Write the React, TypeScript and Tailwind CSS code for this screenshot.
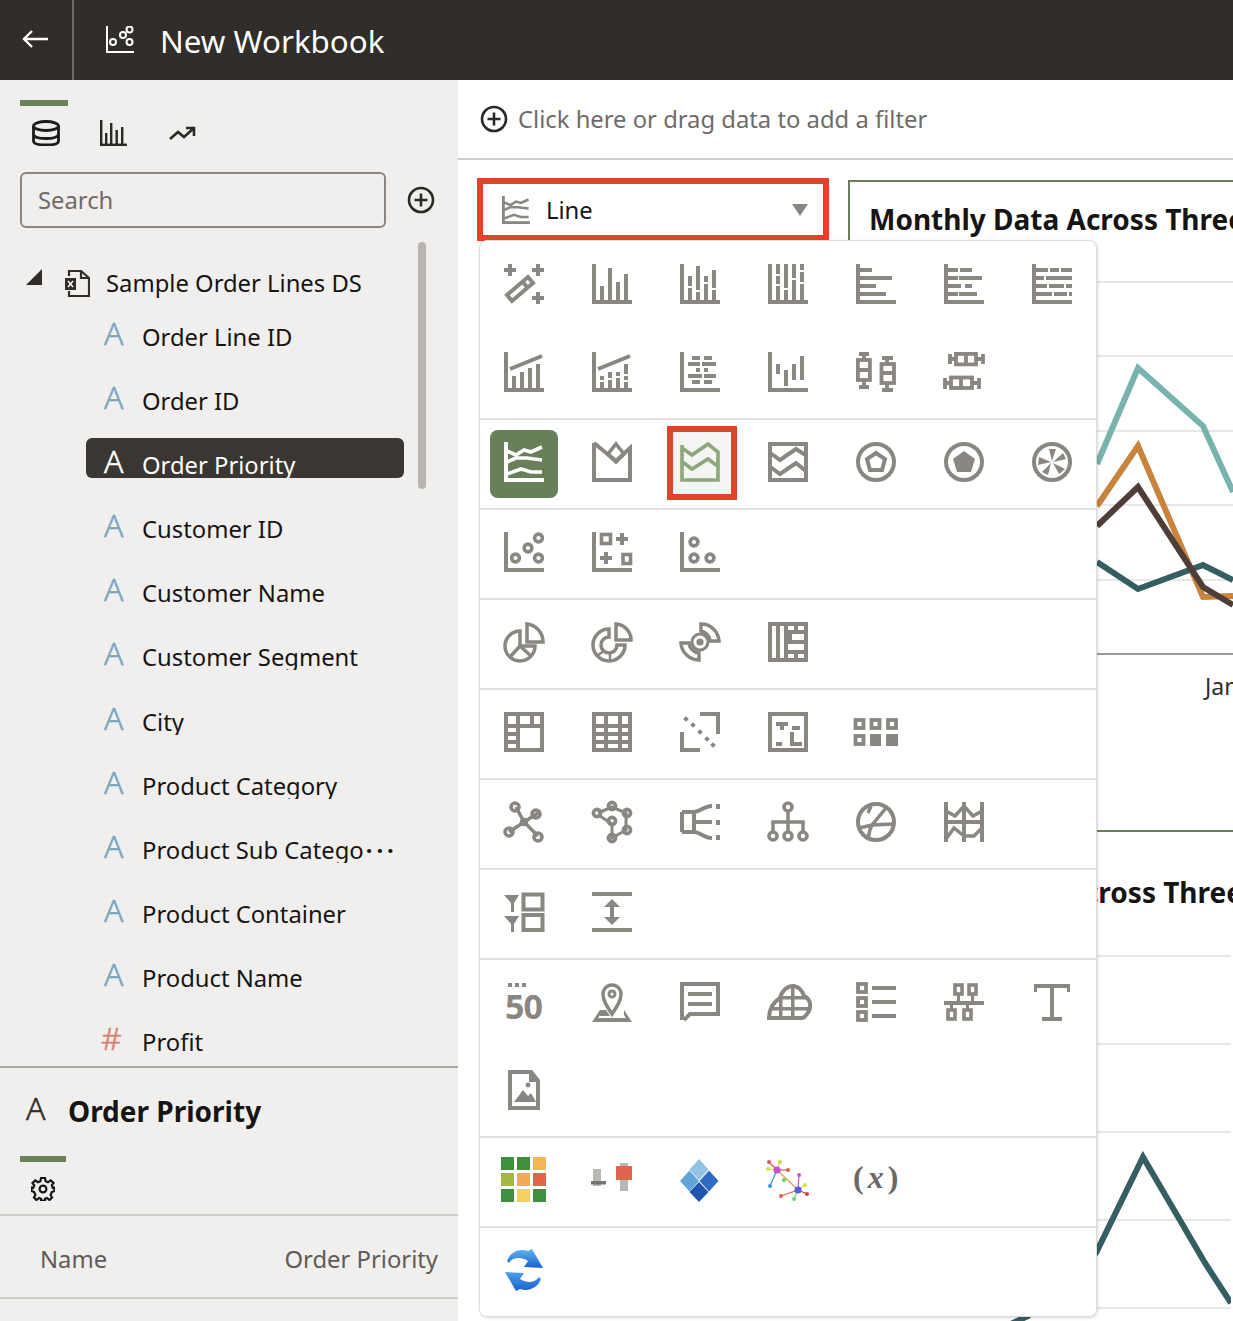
import React from "react";

type Rc = [number, number, number, number];
const Rs = ({ r }: { r: Rc[] }) => (
  <>
    {r.map((a, i) => (
      <rect key={i} x={a[0]} y={a[1]} width={a[2]} height={a[3]} />
    ))}
  </>
);
const st = { stroke: "currentColor", fill: "none", strokeWidth: 3.5 } as const;
const Axis = () => <Rs r={[[0, 0, 4, 40], [0, 36, 40, 4]]} />;
const Ring = ({ x, y, r = 3.9, w = 3.6 }: { x: number; y: number; r?: number; w?: number }) => (
  <circle cx={x} cy={y} r={r} stroke="currentColor" fill="none" strokeWidth={w} />
);
const Ico = ({ children, c = "text-[#8a8681]" }: { children: React.ReactNode; c?: string }) => (
  <svg viewBox="0 0 40 40" fill="currentColor" className={`relative block w-10 h-10 overflow-visible ${c}`}>
    {children}
  </svg>
);

const LineGlyph = () => (
  <>
    <Rs r={[[0, 0, 4, 40], [0, 36, 40, 4]]} />
    <g {...st} strokeWidth={3.6}>
      <path d="M3 9 12 13 20 8 27 10 38 5" />
      <path d="M3 20 12 16 23 16 38 18" />
      <path d="M3 32 17 27 27 30 38 30" />
    </g>
  </>
);

const row1: React.ReactNode[] = [
  <>
    <Rs r={[[0, 4, 12, 4], [4, 0, 4, 12], [28, 4, 12, 4], [32, 0, 4, 12], [28, 32, 12, 4], [32, 28, 4, 12]]} />
    <path {...st} strokeWidth={4} d="M3 31 8 37 29 19 24 13ZM18 17 23 23" />
  </>,
  <>
    <Axis />
    <Rs r={[[8, 22, 4, 14], [16, 4, 4, 32], [24, 18, 4, 18], [32, 10, 4, 26]]} />
  </>,
  <>
    <Axis />
    <Rs r={[[8, 12, 4, 10], [8, 24, 4, 12], [16, 2, 4, 24], [16, 28, 4, 8], [24, 12, 4, 6], [24, 20, 4, 16], [32, 6, 4, 18], [32, 26, 4, 10]]} />
  </>,
  <>
    <Axis />
    <Rs r={[[8, 0, 4, 10], [8, 12, 4, 8], [8, 22, 4, 14], [16, 0, 4, 24], [16, 26, 4, 10], [24, 0, 4, 14], [24, 16, 4, 20], [32, 0, 4, 6], [32, 8, 4, 10], [32, 20, 4, 16]]} />
  </>,
  <>
    <Axis />
    <Rs r={[[4, 4, 12, 4], [4, 12, 32, 4], [4, 20, 16, 4], [4, 28, 26, 4]]} />
  </>,
  <>
    <Axis />
    <Rs r={[[4, 4, 10, 4], [16, 4, 12, 4], [4, 12, 10, 4], [15, 12, 23, 4], [4, 20, 13, 4], [21, 20, 7, 4], [4, 28, 10, 4], [15, 28, 18, 4]]} />
  </>,
  <>
    <Axis />
    <Rs r={[[4, 4, 12, 4], [18, 4, 9, 4], [29, 4, 11, 4], [4, 12, 8, 4], [14, 12, 26, 4], [4, 20, 11, 4], [17, 20, 15, 4], [34, 20, 6, 4], [4, 28, 16, 4], [22, 28, 13, 4], [37, 28, 3, 4]]} />
  </>,
];
const row2: React.ReactNode[] = [
  <>
    <Axis />
    <Rs r={[[8, 24, 4, 12], [16, 20, 4, 16], [24, 16, 4, 20], [32, 12, 4, 24]]} />
    <path {...st} strokeWidth={4} d="M6 17 38 4" />
  </>,
  <>
    <Axis />
    <Rs r={[[8, 24, 4, 4], [8, 30, 4, 6], [16, 20, 4, 6], [16, 28, 4, 8], [24, 20, 4, 4], [24, 26, 4, 10], [32, 12, 4, 10], [32, 24, 4, 4], [32, 30, 4, 6]]} />
    <path {...st} strokeWidth={4} d="M6 17 38 4" />
  </>,
  <>
    <Axis />
    <Rs r={[[12, 4, 8, 4], [24, 4, 8, 4], [8, 10, 12, 4], [22, 10, 14, 4], [16, 16, 4, 4], [24, 16, 4, 4], [8, 22, 14, 4], [24, 22, 12, 4], [12, 28, 8, 4], [24, 28, 8, 4]]} />
  </>,
  <>
    <Axis />
    <Rs r={[[8, 12, 4, 10], [16, 18, 4, 16], [24, 12, 4, 16], [32, 4, 4, 24]]} />
  </>,
  <>
    <g {...st} strokeWidth={3.8}>
      <path d="M3 2H13M8 2V8M8 28V34M3 35H13M26 6H37M31 6V12M31 31V37M26 38H37" />
      <rect x="1.900" y="8" width="12" height="20" />
      <rect x="25.500" y="12" width="12.500" height="19" />
      <path d="M2 18H14M25 21H38" />
    </g>
  </>,
  <>
    <g {...st} strokeWidth={3.8}>
      <path d="M6 2V12M6 7H12M32 7H39M39 2V12M1 26V37M1 31H7M28 31H35M35 26V37" />
      <rect x="12" y="1.900" width="20" height="10.500" />
      <rect x="7" y="25.500" width="21" height="10.500" />
      <path d="M22 2V12M17 26V36" />
    </g>
  </>,
];
const row3: React.ReactNode[] = [
  <LineGlyph />,
  <>
    <path {...st} strokeWidth={4} d="M2 1V38H38V6L24 19 2 1" />
    <path {...st} strokeWidth={3.6} d="M24 2 32 12 24 20 16 12Z" />
  </>,
  <>
    <path {...st} strokeWidth={3.6} d="M2 3V38H38V10L28 2 12 13 2 6" />
    <path {...st} strokeWidth={3.6} d="M1 19 12 27 28 17 39 25" />
  </>,
  <>
    <rect {...st} strokeWidth={4} x="2" y="2" width="36" height="36" />
    <path {...st} strokeWidth={4} d="M1 10 12 18 28 7 39 14M1 24 12 32 28 21 39 30" />
  </>,
  <>
    <circle {...st} strokeWidth={4} cx="20" cy="20" r="18" />
    <path {...st} strokeWidth={4} d="M20 11 29 17 26 28H14L11 17Z" />
  </>,
  <>
    <circle {...st} strokeWidth={4} cx="20" cy="20" r="18" />
    <path d="M20 9 31 17 27 30H13L9 17Z" />
  </>,
  <>
    <circle {...st} strokeWidth={4} cx="20" cy="20" r="18" />
    <path d="M17 7H24L20 19ZM31 11 34 17 21 20ZM33 27 27 32 21 21ZM16 33 10 30 19 21ZM6 23 7 15 19 20Z" />
  </>,
];
const row4: React.ReactNode[] = [
  <>
    <Axis />
    <Ring x={11.5} y={26} />
    <Ring x={24} y={16} />
    <Ring x={34.5} y={6} />
    <Ring x={34.5} y={26} />
  </>,
  <>
    <Axis />
    <rect {...st} strokeWidth={3.6} x="9.500" y="2.500" width="9" height="9" />
    <rect {...st} strokeWidth={3.6} x="31" y="22.500" width="7.500" height="9" />
    <Rs r={[[24, 5, 12, 4], [28, 1, 4, 12], [8, 24, 12, 4], [12, 20, 4, 12]]} />
  </>,
  <>
    <Axis />
    <Ring x={14} y={10} />
    <Ring x={14} y={26} />
    <Ring x={30} y={26} />
  </>,
];
const row5: React.ReactNode[] = [
  <>
    <path {...st} d="M23 2V20H39A18 18 0 0 0 23 2Z" />
    <path {...st} d="M16 9A15 15 0 1 0 31 24H16ZM16 24 6 35M16 24 27 34" />
  </>,
  <>
    <path {...st} d="M24 2V18H39A16 16 0 0 0 24 2Z" />
    <path {...st} d="M17 7A16 16 0 1 0 33 23H25A8 8 0 1 1 17 15Z" />
    <path {...st} strokeWidth={2.5} d="M6 33 12 29M18 39 18 32" />
  </>,
  <>
    <path {...st} d="M21 2V9A11 11 0 0 1 30 19H39A18 18 0 0 0 21 2Z" />
    <path {...st} d="M19 38V31A11 11 0 0 1 9 21H1A18 18 0 0 0 19 38Z" />
    <circle {...st} strokeWidth={3} cx="20" cy="20" r="8" />
    <circle cx="20" cy="20" r="3.600" />
  </>,
  <>
    <rect {...st} strokeWidth={4} x="2" y="2" width="36" height="36" />
    <Rs r={[[8, 0, 4, 40], [16, 0, 4, 40], [16, 8, 24, 4], [16, 18, 24, 4], [16, 28, 24, 4], [26, 0, 4, 12], [26, 28, 4, 10], [20, 12, 4, 6]]} />
  </>,
];
const row6: React.ReactNode[] = [
  <>
    <rect {...st} strokeWidth={4} x="2" y="2" width="36" height="36" />
    <Rs r={[[0, 12, 40, 4], [12, 0, 4, 40], [26, 0, 4, 14], [0, 20, 14, 4], [0, 28, 14, 4]]} />
  </>,
  <>
    <rect {...st} strokeWidth={4} x="2" y="2" width="36" height="36" />
    <Rs r={[[0, 12, 40, 4], [0, 20, 40, 4], [0, 28, 40, 4], [12, 0, 4, 40], [26, 0, 4, 40]]} />
  </>,
  <>
    <path {...st} strokeWidth={4} d="M20 2H38V22M2 20V38H20" />
    {[[6, 7], [13, 13], [20, 20], [27, 27], [33, 33]].map(([x, y], i) => (
      <rect key={i} x={x - 2} y={y - 2} width="4" height="4" transform={`rotate(45 ${x} ${y})`} />
    ))}
  </>,
  <>
    <rect {...st} strokeWidth={4} x="2" y="2" width="36" height="36" />
    <Rs r={[[8, 10, 12, 4], [12, 14, 4, 4], [24, 14, 8, 4], [8, 30, 6, 4], [22, 20, 4, 14], [22, 30, 12, 4]]} />
  </>,
  <g transform="translate(0 1)">
    <rect {...st} strokeWidth={3.800} x="-0.500" y="7" width="8" height="8" />
    <rect {...st} strokeWidth={3.800} x="15.500" y="7" width="8" height="8" />
    <rect {...st} strokeWidth={3.800} x="32" y="7" width="8" height="8" />
    <rect {...st} strokeWidth={3.800} x="-0.500" y="23" width="8" height="8" />
    <Rs r={[[14, 21, 11, 12], [30, 21, 12, 12]]} />
  </g>,
];
const row7: React.ReactNode[] = [
  <>
    <path {...st} d="M12 5 20 20 34 11M20 20 34 34M20 20 5 30" />
    <Ring x={11} y={5} r={4} />
    <Ring x={32} y={12} r={4} />
    <Ring x={5} y={30} r={4} />
    <Ring x={34} y={35} r={4} />
    <Ring x={20} y={20} r={2.5} />
  </>,
  <>
    <path {...st} strokeWidth={3} d="M6 11 20 5 34 11 34 28 20 36 20 22 8 14" />
    <Ring x={5} y={11} r={3.6} />
    <Ring x={20} y={4} r={3.6} />
    <Ring x={35} y={11} r={3.6} />
    <Ring x={20} y={19} r={3.6} />
    <Ring x={35} y={28} r={3.6} />
    <Ring x={20} y={36} r={3.6} />
  </>,
  <>
    <path {...st} strokeWidth={4} d="M2 10H14C20 10 24 4 32 4M2 30H14C20 30 24 36 32 36M2 10V30M14 10V30M14 20H32" />
    <Rs r={[[36, 2, 4, 5], [36, 18, 4, 5], [36, 33, 4, 5]]} />
  </>,
  <>
    <Ring x={20} y={5} r={4} />
    <Ring x={5} y={34} r={4} />
    <Ring x={20} y={34} r={4} />
    <Ring x={35} y={34} r={4} />
    <path {...st} d="M20 9V30M5 30V20H35V30" />
  </>,
  <>
    <circle {...st} strokeWidth={4} cx="20" cy="20" r="18" />
    <path {...st} d="M3 26 16 23 38 22M30 6 16 23C13 28 13 32 12 37M15 4 12 11" />
  </>,
  <>
    <Rs r={[[0, 0, 4, 40], [18, 0, 4, 40], [36, 0, 4, 40], [0, 18, 40, 4]]} />
    <path {...st} d="M2 9 11 14 20 4 29 14 38 9M2 37 10 26 20 34 30 34 38 26" />
  </>,
];
const row8: React.ReactNode[] = [
  <>
    <path d="M0 3H15L10 11V20H7V11ZM0 24H15L10 32V40H7V32Z" />
    <rect {...st} strokeWidth={4} x="19.500" y="2.500" width="19" height="15" />
    <rect {...st} strokeWidth={4} x="19.500" y="23" width="19" height="15" />
  </>,
  <>
    <Rs r={[[0, 0, 40, 4], [0, 36, 40, 4], [18, 10, 4, 20]]} />
    <path d="M20 7 28 15H12ZM20 33 12 25H28Z" />
  </>,
];
const row9: React.ReactNode[] = [
  <>
    <Rs r={[[4, 1, 4, 4], [11, 1, 4, 4], [18, 1, 4, 4]]} />
    <text x="1" y="37" fontFamily="'Noto Sans', sans-serif" fontWeight="700" fontSize="34" letterSpacing="-1">50</text>
  </>,
  <>
    <path {...st} d="M20 32C14 23 11 18 11 12A9 9 0 0 1 29 12C29 18 26 23 20 32Z" />
    <circle {...st} strokeWidth={3} cx="20" cy="12" r="3" />
    <path d="M8 28H14L18 34H8ZM0 40 8 28V33L6 36H34L32 33V28L40 40Z" />
  </>,
  <path {...st} strokeWidth={4} d="M2 38V2H38V32H10L4 38M8 12H32M8 22H32" />,
  <>
    <path {...st} strokeWidth={4} d="M1 36C1 27 4 21 12 16 14 8 20 4 25 4 30 4 35 9 36 14 43 17 44 26 39 32 37 35 36 36 34 36Z" />
    <Rs r={[[4, 25, 36, 3.500], [13, 14, 26, 3.500], [11, 16, 3.500, 20], [23, 4, 3.500, 32]]} />
  </>,
  <>
    <rect {...st} strokeWidth={3.800} x="2" y="2" width="8" height="8" />
    <rect {...st} strokeWidth={3.800} x="2" y="16" width="8" height="8" />
    <rect {...st} strokeWidth={3.800} x="2" y="30" width="8" height="8" />
    <Rs r={[[16, 4, 24, 4], [16, 18, 24, 4], [16, 32, 24, 4]]} />
  </>,
  <>
    <rect {...st} strokeWidth={3.600} x="11" y="3" width="7" height="9" />
    <rect {...st} strokeWidth={3.600} x="25" y="3" width="7" height="9" />
    <rect {...st} strokeWidth={3.600} x="4" y="28" width="7" height="9" />
    <rect {...st} strokeWidth={3.600} x="20" y="28" width="7" height="9" />
    <Rs r={[[0, 19, 40, 4], [13, 12, 3, 8], [27, 12, 3, 8], [6, 22, 3, 6], [22, 22, 3, 6]]} />
  </>,
  <Rs r={[[2, 2, 36, 4], [2, 2, 3, 8], [35, 2, 3, 8], [18, 4, 4, 34], [10, 35, 20, 4]]} />,
];

const Doc = () => (
  <>
    <path d="M0 0H24L32 10V40H0ZM4 4V36H28V12H21V4Z" transform="translate(4 0)" />
    <circle cx="24" cy="15" r="2.400" />
    <path d="M10 32 19 20 24 26 27 23 32 32Z" />
  </>
);

const Heat = () => {
  const c = ["#3f8f3f", "#3f8f3f", "#f3b45a", "#a3b845", "#f3aa57", "#e0654a", "#3f8f3f", "#f5cf63", "#3f8f3f"];
  return (
    <>
      {c.map((f, i) => (
        <rect key={i} x={-3 + (i % 3) * 16} y={-3 + Math.floor(i / 3) * 16} width="13" height="13" fill={f} />
      ))}
    </>
  );
};
const Slider = () => (
  <>
    <rect x="1" y="9" width="8" height="17" fill="#b9b7b4" />
    <rect x="-1" y="21" width="15" height="3.500" fill="#77746f" />
    <rect x="28" y="3" width="8" height="28" fill="#b9b7b4" />
    <rect x="24" y="6" width="16" height="14" fill="#e0654a" />
  </>
);
const Diamond = () => (
  <>
    <path d="M19 -1 28.500 9.500 19 20 9.500 9.500Z" fill="#93c3e2" />
    <path d="M9.500 10.500 19 21 9.500 31.500 0 21Z" fill="#5fa5d8" />
    <path d="M29 10.500 38.500 21 29 31.500 19.500 21Z" fill="#2d6cc0" />
    <path d="M19 22 28.500 32 19 42 9.500 32Z" fill="#2055ae" />
  </>
);
const Net = () => {
  const h1 = [9, 10];
  const h2 = [30, 30];
  const a: [number, number, string][] = [[1, 2, "#cf5a5a"], [12, 2, "#c9d94a"], [20, 10, "#d9604a"], [0, 9, "#d5e04a"], [2, 26, "#3f97d9"]];
  const b: [number, number, string][] = [[31, 15, "#c35ac8"], [37, 25, "#d5e04a"], [39, 34, "#d9403a"], [26, 39, "#6bd96b"], [13, 36, "#d9604a"]];
  return (
    <>
      {a.map(([x, y, c], i) => (
        <g key={i}>
          <line x1={h1[0]} y1={h1[1]} x2={x} y2={y} stroke={c} strokeWidth="1.200" />
          <circle cx={x} cy={y} r="2" fill={c} />
        </g>
      ))}
      {b.map(([x, y, c], i) => (
        <g key={i}>
          <line x1={h2[0]} y1={h2[1]} x2={x} y2={y} stroke={c} strokeWidth="1.200" />
          <circle cx={x} cy={y} r="2" fill={c} />
        </g>
      ))}
      <line x1={h1[0]} y1={h1[1]} x2={h2[0]} y2={h2[1]} stroke="#e89a4a" strokeWidth="1.200" />
      <circle cx="16" cy="20" r="2.200" fill="#6bd96b" />
      <circle cx={h1[0]} cy={h1[1]} r="3.600" fill="#c94fd0" />
      <circle cx={h2[0]} cy={h2[1]} r="3.600" fill="#5a5fd8" />
    </>
  );
};
const Refresh = () => (
  <>
    <defs>
      <linearGradient id="rfa" x1="0" y1="0" x2="0" y2="1">
        <stop offset="0" stopColor="#5fb7ee" />
        <stop offset="1" stopColor="#1a5fd0" />
      </linearGradient>
      <linearGradient id="rfb" x1="0" y1="1" x2="0" y2="0">
        <stop offset="0" stopColor="#4fa0ea" />
        <stop offset="1" stopColor="#1a5fd0" />
      </linearGradient>
    </defs>
    <path fill="url(#rfa)" d="M3 11C6 3 14 -2 24 1L28 -1 39 18 20 17 24 11C16 6 8 8 5 13Z" />
    <path fill="url(#rfb)" transform="rotate(180 20 20)" d="M3 11C6 3 14 -2 24 1L28 -1 39 18 20 17 24 11C16 6 8 8 5 13Z" />
  </>
);

const Section = ({ items, last = false }: { items: React.ReactNode[]; last?: boolean }) => (
  <div className={`grid grid-cols-7 gap-y-12 pt-[22px] pb-[26px] ${last ? "" : "border-b-2 border-[#e4e2df]"}`}>
    {items.map((n, i) => (
      <div key={i} className="relative px-6 h-10 w-[88px]">
        {n}
      </div>
    ))}
  </div>
);

const fields = [
  "Order Line ID",
  "Order ID",
  "Order Priority",
  "Customer ID",
  "Customer Name",
  "Customer Segment",
  "City",
  "Product Category",
  "Product Sub Catego",
  "Product Container",
  "Product Name",
  "Profit",
];

const Field = ({ name }: { name: string }) => {
  const sel = name === "Order Priority";
  const num = name === "Profit";
  return (
    <div className={`ml-[86px] w-[318px] h-10 shrink-0 overflow-hidden flex pl-[18px] rounded-md ${sel ? "bg-[#3a3632] text-white" : "text-[#161513]"}`}>
      <span className={`w-[38px] shrink-0 pt-[6px] h-10 text-[32px] leading-[34px] font-light [-webkit-text-stroke:0.5px] ${sel ? "text-white" : num ? "text-[#d4826f] -ml-[3px] pr-[3px] box-content" : "text-[#7aa6bb]"}`}>
        {num ? "#" : "A"}
      </span>
      <span className="text-[23.800px] pt-[11px] leading-8 whitespace-nowrap flex">
        {name}
        {name === "Product Sub Catego" && <span className="tracking-[4px] font-bold ml-0.5">···</span>}
      </span>
    </div>
  );
};

const Grid = ({ ys }: { ys: number[] }) => (
  <>
    {ys.map((y) => (
      <line key={y} x1="850" x2="1233" y1={y} y2={y} stroke="#e7e7e7" strokeWidth="2" />
    ))}
  </>
);

const Title = ({ cls }: { cls: string }) => (
  <div className={`pl-5 -ml-px whitespace-nowrap text-[28px] font-bold leading-10 text-[#161513] ${cls}`}>Monthly Data Across Three Years</div>
);

const PlusCircle = () => (
  <svg viewBox="0 0 28 28" className="w-7 h-7 block" fill="none" stroke="#2b2926" strokeWidth="2.600">
    <circle cx="14" cy="14" r="12" />
    <path d="M14 7.500V20.500M7.500 14H20.500" />
  </svg>
);

export default function App() {
  return (
    <div className="relative w-[1233px] h-[1321px] overflow-hidden bg-white font-['Noto_Sans',sans-serif] text-[#161513]">
      <header className="h-20 bg-[#312d2a] flex items-stretch text-white">
        <div className="w-[74px] border-r-2 border-[#6f6b67] flex items-center pl-[22px]">
          <svg viewBox="0 0 26 18" className="w-[26px] h-[18px] -mt-[2px]" fill="none" stroke="#fff" strokeWidth="2.400">
            <path d="M26 9H2M10 1 2 9 10 17" />
          </svg>
        </div>
        <div className="flex items-center pl-[32px]">
          <svg viewBox="0 0 28 27" className="w-7 h-[27px] -mt-[1px]" fill="none" stroke="#fff" strokeWidth="2">
            <path d="M1 0V26H28" />
            <circle cx="7" cy="16" r="3" />
            <circle cx="17" cy="9" r="3" />
            <circle cx="23.500" cy="3.500" r="3" />
            <circle cx="23.500" cy="16" r="3" />
          </svg>
          <div className="ml-[26px] mt-[2px] text-[31.300px] leading-10 whitespace-nowrap">New Workbook</div>
        </div>
      </header>

      <div className="flex h-[1241px]">
        <aside className="w-[458px] shrink-0 bg-[#f1efed] flex flex-col">
          <div className="relative flex-1 min-h-0 overflow-hidden">
            <div className="ml-5 mt-5 w-12 h-1.5 bg-[#6b8259]" />
            <div className="flex mt-3.5 h-[52px] pl-[32px]">
              <svg viewBox="0 0 28 26" className="w-7 h-[26px]" fill="none" stroke="#1d1b19" strokeWidth="2.800">
                <ellipse cx="14" cy="6" rx="12.500" ry="4.500" />
                <path d="M1.500 6V21C1.500 24 7 25 14 25S26.500 24 26.500 21V6M1.500 14C1.500 17 7 18.500 14 18.500S26.500 17 26.500 14" />
              </svg>
              <svg viewBox="0 0 27 26" className="w-[27px] h-[26px] ml-10" fill="#2b2926">
                <Rs r={[[0, 0, 2.400, 26], [0, 23.600, 27, 2.400], [5, 13, 2.400, 11], [10, 3, 2.400, 21], [15.500, 10, 2.400, 14], [21, 7, 2.400, 17]]} />
              </svg>
              <svg viewBox="0 0 27 16" className="w-[27px] h-4 ml-[42px] mt-1.5" fill="none" stroke="#2b2926" strokeWidth="2.600">
                <path d="M1 13 9 6 15 11 25 2M17 2H25V10" />
              </svg>
            </div>
            <div className="flex items-center">
              <div className="ml-5 w-[366px] h-14 rounded-md border-2 border-[#8a8681] flex items-center pl-4 pt-[2px] text-[23.800px] text-[#6f6b67]">Search</div>
              <div className="ml-[21px]">
                <PlusCircle />
              </div>
            </div>
            <div className="flex items-center h-14 mt-[27px]">
              <svg viewBox="0 0 16 16" className="ml-[26px] w-4 h-4 -mt-[13px]" fill="#312d2a">
                <path d="M16 0V16H0Z" />
              </svg>
              <svg viewBox="0 0 26 27" className="ml-[22px] w-[26px] h-[27px]" fill="none" stroke="#312d2a" strokeWidth="2.200">
                <path d="M5 6V1H17L25 8V26H5V21" />
                <path d="M17 1V8H25" />
                <rect x="1" y="8" width="11" height="12" fill="#312d2a" stroke="none" />
                <path d="M4 11 9 17M9 11 4 17" stroke="#fff" strokeWidth="1.400" />
              </svg>
              <div className="ml-4 mt-[2px] text-[23.800px] leading-none whitespace-nowrap">Sample Order Lines DS</div>
            </div>
            <div className="flex flex-col gap-[24.100px] -mt-[1px]">
              {fields.map((f) => (
                <Field key={f} name={f} />
              ))}
            </div>
            <div className="absolute left-[418px] top-[162px] w-2 h-[247px] rounded bg-[#b8b5b0]" />
          </div>
          <div className="h-[255px] shrink-0 border-t-2 border-[#aaa8a4]">
            <div className="flex h-[88px] pl-[26px]">
              <span className="text-[32px] leading-[80px] font-light [-webkit-text-stroke:0.5px] text-[#312d2a] w-[42px]">A</span>
              <span className="text-[28px] font-bold leading-[86px] whitespace-nowrap">Order Priority</span>
            </div>
            <div className="ml-5 w-[46px] h-1.5 bg-[#6b8259]" />
            <div className="h-[54px] pl-[31px] pt-[15px] border-b-2 border-[#cfcdc9]">
              <svg viewBox="0 0 24 24" className="w-6 h-6" fill="none" stroke="#161513" strokeWidth="2.200">
                <circle cx="12" cy="12" r="3.400" />
                <path d="M10 1H14L14.600 4.200 17 5.200 19.700 3.400 22.500 6 20.700 8.500 21.800 11 23.500 10.500V14L20.800 15 19.600 18 21 20.500 18.500 23 16 21 14 21.800 14 23.500H10V21.800L8 21 5.500 23 3 20.500 4.400 18 3.200 15 0.500 14V10.500L2.200 11 3.300 8.500 1.500 6 4.300 3.400 7 5.200 9.400 4.200Z" />
              </svg>
            </div>
            <div className="h-[83px] flex items-center justify-between pl-10 pr-5 pt-[6px] border-b-2 border-[#cfcdc9] text-[23.800px] text-[#5f5b57]">
              <span>Name</span>
              <span>Order Priority</span>
            </div>
          </div>
        </aside>

        <main className="flex-1 min-w-0 overflow-hidden bg-white">
          <div className="h-20 border-b-2 border-[#cfcdc9] flex items-center pl-[22px]">
            <PlusCircle />
            <span className="ml-[10px] mt-[2px] text-[23.800px] text-[#6f6b67] whitespace-nowrap">Click here or drag data to add a filter</span>
          </div>
          <div className="flex items-start pl-[19px] pt-[18px] w-[1400px]">
            <div className="w-[352px] h-[63px] shrink-0 border-[6px] border-[#e8412a] flex items-center pl-[19px] pr-[15px]">
              <svg viewBox="0 0 40 40" className="w-7 h-7 text-[#8a8681]" fill="currentColor">
                <LineGlyph />
              </svg>
              <span className="ml-4 pt-[2px] text-[23.800px] flex-1">Line</span>
              <svg viewBox="0 0 16 12" className="w-4 h-3" fill="#8a8681">
                <path d="M0 0H16L8 12Z" />
              </svg>
            </div>
            <div className="ml-[19px] mt-0.5 w-[800px] shrink-0">
              <div className="border-t-2 border-l-2 border-[#6b7d5c]">
                <Title cls="pt-[17px] h-[58px]" />
                <svg viewBox="850 240 383 590" width="383" height="590" className="block" fill="none">
                  <Grid ys={[282, 356, 431, 505, 580]} />
                  <line x1="850" x2="1233" y1="654" y2="654" stroke="#9b9b9b" strokeWidth="2" />
                  <polyline points="1097,464 1138,368 1203,426 1233,492" stroke="#78b3ae" strokeWidth="6" />
                  <polyline points="1097,506 1138,446 1203,597 1233,596" stroke="#c8843c" strokeWidth="6" />
                  <polyline points="1097,562 1138,589 1203,565 1233,580" stroke="#355e63" strokeWidth="6" />
                  <polyline points="1097,526 1138,487 1203,587 1233,605" stroke="#4d3f38" strokeWidth="6" />
                  <text x="1205" y="695" fontSize="23" fill="#312d2a" stroke="none">Jan</text>
                </svg>
              </div>
              <div className="border-t-2 border-[#6b7d5c]">
                <Title cls="pt-10 h-20" />
                <svg viewBox="850 912 383 409" width="383" height="409" className="block" fill="none">
                  <Grid ys={[956, 1044, 1132, 1220, 1308]} />
                  <polyline points="1000,1330 1030,1316 1098,1253 1145,1157 1207,1263 1233,1303" stroke="#355e63" strokeWidth="6" />
                </svg>
              </div>
            </div>
          </div>
        </main>
      </div>

      {/* chart type menu */}
      <div className="absolute left-[479px] top-[240px] w-[618px] h-[1077px] bg-white border border-[#dedcd9] rounded-lg shadow-[1px_1px_3px_rgba(0,0,0,0.15)]">
        <div className="pt-[1px]">
          <div className="grid grid-cols-7 gap-y-12 pt-[22px] pb-[26px] border-b-2 border-[#e4e2df]">
            {[...row1, ...row2].map((n, i) => (
              <div key={i} className="relative px-6 h-10 w-[88px]">
                <Ico>{n}</Ico>
              </div>
            ))}
          </div>
          <div className="grid grid-cols-7 pt-[22px] pb-[26px] border-b-2 border-[#e4e2df]">
            {row3.map((n, i) => (
              <div key={i} className="relative px-6 h-10 w-[88px]">
                {i === 0 && <span className="absolute left-[10px] -top-3 w-[68px] h-[68px] rounded-lg bg-[#68805a]" />}
                {i === 2 && <span className="absolute left-[11px] -top-4 w-[70px] h-[74px] border-[6px] border-[#e8412a] bg-[#f4f4f2]" />}
                <Ico c={i === 0 ? "text-white" : i === 2 ? "text-[#8ca77b]" : "text-[#8a8681]"}>{n}</Ico>
              </div>
            ))}
          </div>
          {[row4, row5, row6, row7, row8].map((r, k) => (
            <Section key={k} items={r.map((n, i) => <Ico key={i}>{n}</Ico>)} />
          ))}
          <div className="grid grid-cols-7 gap-y-12 pt-[22px] pb-[26px] border-b-2 border-[#e4e2df]">
            {[...row9].map((n, i) => (
              <div key={i} className="relative px-6 h-10 w-[88px]">
                <Ico>{n}</Ico>
              </div>
            ))}
            <div className="relative px-6 h-10 w-[88px]">
              <Ico>
                <Doc />
              </Ico>
            </div>
          </div>
          <Section
            items={[
              <Ico key="a"><Heat /></Ico>,
              <Ico key="b"><Slider /></Ico>,
              <Ico key="c"><Diamond /></Ico>,
              <Ico key="d"><Net /></Ico>,
              <div key="e" className="w-10 -ml-[3px] -mt-[3px] h-10 flex items-center font-['Liberation_Serif',serif] font-bold text-[32px] leading-none text-[#6b6864] whitespace-nowrap tracking-[4px]">
                (<i>x</i>)
              </div>,
            ]}
          />
          <Section items={[<Ico key="r"><Refresh /></Ico>]} last />
        </div>
      </div>
    </div>
  );
}
